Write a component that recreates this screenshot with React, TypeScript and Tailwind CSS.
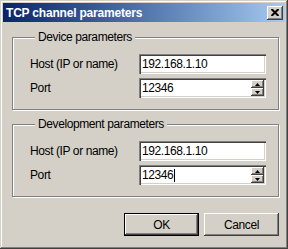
const raised =
  'shadow-[inset_-1px_-1px_0_#404040,inset_1px_1px_0_#ffffff,inset_-2px_-2px_0_#808080,inset_2px_2px_0_#d4d0c8]';
const sunken =
  'shadow-[inset_1px_1px_0_#808080,inset_2px_2px_0_#404040,inset_-1px_-1px_0_#ffffff,inset_-2px_-2px_0_#d4d0c8]';

const Arrow = ({ up }: { up?: boolean }) => (
  <svg width="5" height="3" viewBox="0 0 5 3">
    <path d={up ? 'M2.5 0 L5 3 L0 3 Z' : 'M0 0 L5 0 L2.5 3 Z'} fill="#000" />
  </svg>
);

const Field = ({ value, spin, caret }: { value: string; spin?: boolean; caret?: boolean }) => (
  <div className={`flex h-[20px] w-[127px] bg-white p-[2px] ${sunken}`}>
    <div className="flex flex-1 items-center pl-[1px]">
      <span>{value}</span>
      {caret && <span className="ml-px h-[13px] w-px bg-black" />}
    </div>
    {spin && (
      <div className="flex w-[13px] flex-col">
        <div className={`flex flex-1 items-center justify-center bg-[#d4d0c8] ${raised}`}>
          <Arrow up />
        </div>
        <div className={`flex flex-1 items-center justify-center bg-[#d4d0c8] ${raised}`}>
          <Arrow />
        </div>
      </div>
    )}
  </div>
);

const Group = ({ title, caret }: { title: string; caret?: boolean }) => (
  <fieldset className="ml-[4px] mr-[1px] border border-[#808080] pb-[11px] pl-[17px] pr-[7px] pt-[10px] shadow-[1px_1px_0_#ffffff,inset_1px_1px_0_#ffffff]">
    <legend className="ml-[5px] bg-[#d4d0c8] px-[3px] leading-[14px]">{title}</legend>
    <div className="flex flex-col gap-[4px]">
      <div className="flex items-center">
        <span className="w-[109px]">Host (IP or name)</span>
        <Field value="192.168.1.10" />
      </div>
      <div className="flex items-center">
        <span className="w-[109px]">Port</span>
        <Field value="12346" spin caret={caret} />
      </div>
    </div>
  </fieldset>
);

export default function App() {
  return (
    <div
      className="flex h-[249px] w-[288px] flex-col bg-[#d4d0c8] p-[3px] text-[12px] tracking-[-0.4px] text-black shadow-[inset_-1px_-1px_0_#404040,inset_1px_1px_0_#d4d0c8,inset_-2px_-2px_0_#808080,inset_2px_2px_0_#ffffff]"
      style={{ fontFamily: '"Liberation Sans", Arial, sans-serif' }}
    >
      <div className="flex h-[19px] items-center justify-between bg-gradient-to-r from-[#0a246a] to-[#a6caf0] pl-[3px] pr-[2px]">
        <span className="text-[12px] font-bold tracking-[-0.2px] text-white">TCP channel parameters</span>
        <div className={`flex h-[14px] w-[16px] items-center justify-center bg-[#d4d0c8] ${raised}`}>
          <svg width="8" height="7" viewBox="0 0 8 7">
            <path d="M0.5 0 L7.5 7 M7.5 0 L0.5 7" stroke="#000" strokeWidth="2" />
          </svg>
        </div>
      </div>
      <div className="flex flex-col gap-[7px] pl-[5px] pr-[5px] pt-[8px]">
        <Group title="Device parameters" />
        <Group title="Development parameters" caret />
      </div>
      <div className="mt-[16px] flex justify-end gap-[5px] pr-[6px]">
        <div className="flex h-[23px] w-[75px] items-center justify-center border border-black">
          <div className={`flex h-full w-full items-center justify-center ${raised}`}>OK</div>
        </div>
        <div className={`flex h-[23px] w-[75px] items-center justify-center ${raised}`}>Cancel</div>
      </div>
    </div>
  );
}
